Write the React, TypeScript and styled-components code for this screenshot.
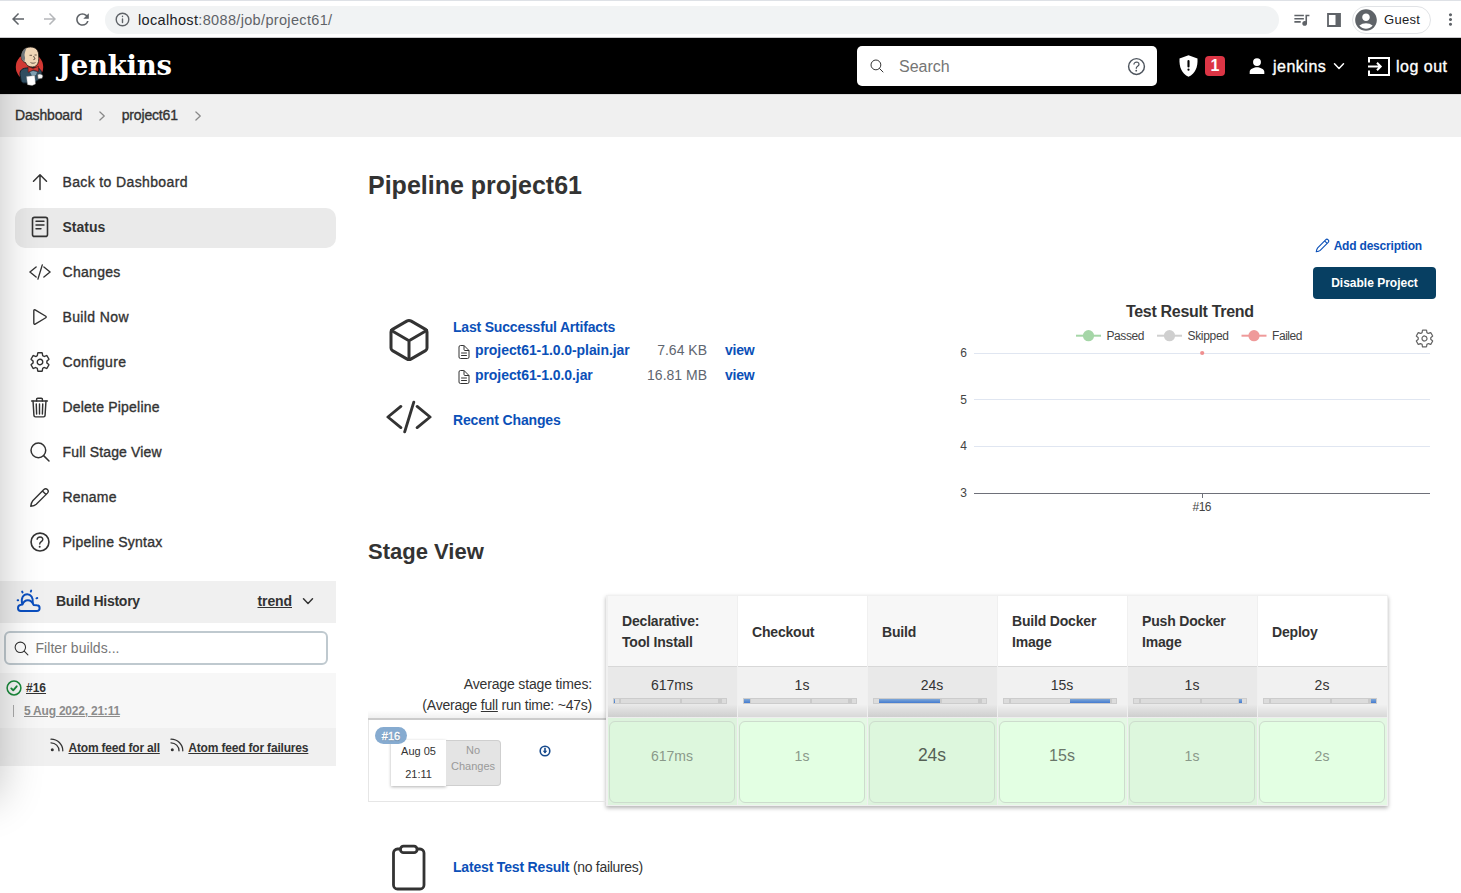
import React from 'react';
import styled, { createGlobalStyle } from 'styled-components';
import {
  IoSettingsOutline, IoTrashOutline, IoSearchOutline, IoHelpCircleOutline,
  IoCubeOutline, IoDocumentTextOutline, IoPlayOutline, IoPersonSharp,
} from 'react-icons/io5';
import { MdOutlineQueueMusic, MdAccountCircle, MdRefresh, MdArrowBack, MdArrowForward, MdMoreVert } from 'react-icons/md';

const INK = '#333333';
const LINK = '#0b50b8';

const Global = createGlobalStyle`
  * { box-sizing: border-box; }
  body { margin: 0; background: #fff; color: ${INK}; overflow: hidden;
    font-family: "Liberation Sans", Arial, Helvetica, sans-serif; font-size: 14px; }
  svg { display: block; flex: none; }
`;

const Page = styled.div`position: relative; width: 1461px; height: 893px; overflow: hidden;`;

/* ---------- text ---------- */
const Text = styled.span<{ $s?: number; $w?: 'medium' | 'bold'; $c?: string; $ls?: number; $u?: boolean }>`
  font-size: ${p => p.$s ?? 14}px;
  font-weight: ${p => (p.$w === 'bold' ? 700 : 400)};
  -webkit-text-stroke: ${p => (p.$w === 'medium' ? '0.35px' : '0')};
  color: ${p => p.$c ?? INK};
  letter-spacing: ${p => p.$ls ?? 0}px;
  text-decoration: ${p => (p.$u ? 'underline' : 'none')};
  white-space: nowrap;
`;

/* ---------- browser toolbar ---------- */
const BrowserBar = styled.div`
  height: 38px; display: flex; align-items: center; color: #5f6368; padding: 1px 0 0 9px;
  border-top: 1px solid #dee1e6; border-bottom: 1px solid #c9c9cc;
`;
const NavIcons = styled.div`display: flex; flex: none; gap: 14px; width: 96px; svg:nth-child(2) { color: #b5b7ba; }`;
const Address = styled.div`
  width: 1174px; flex: none; height: 28px; border-radius: 14px; background: #f1f3f4;
  display: flex; align-items: center; gap: 8px; padding-left: 10px;
`;
const BarTools = styled.div`display: flex; align-items: center; margin-left: 13px; gap: 16px;`;
const Guest = styled.div`
  width: 79px; flex: none; height: 28px; border: 1px solid #e1e3e6; border-radius: 14px; margin: 0 -6.5px 0 -5px;
  display: flex; align-items: center; gap: 5px;
`;

/* ---------- header ---------- */
const Header = styled.header`height: 56px; background: #000; display: flex; align-items: center; padding-left: 15px; color: #fff;`;
const Brand = styled.div`
  display: flex; align-items: center; width: 842px; gap: 14px;
`;
const BrandName = styled.span`
  font: 700 27.5px/34px "DejaVu Serif", Georgia, serif; color: #fff; letter-spacing: -0.25px; margin-top: -3px;
`;
const SearchBox = styled.div`
  width: 300px; height: 40px; border-radius: 5px; background: #fff; color: #333;
  display: flex; align-items: center; padding: 0 9px 0 12px;
  span { flex: 1; margin: 1px 0 0 14px; }
`;
const Security = styled.div`display: flex; align-items: center; gap: 7px; margin-left: 22px; width: 69px;`;
const Alert = styled.span`
  width: 20px; height: 20px; border-radius: 4px; background: #dc3545; display: grid; place-items: center;
`;
const HeaderLink = styled.div<{ $w: number; $gap: number }>`
  display: flex; align-items: center; width: ${p => p.$w}px; gap: ${p => p.$gap}px;
  span { margin-top: 1px; }
`;

/* ---------- breadcrumbs ---------- */
const Crumbs = styled.nav`
  height: 43px; background: #f0f0f0; border-top: 1px solid #dcdcdc; display: flex; align-items: center; padding: 0 0 2px 15px;
  svg { margin: 1px 14.5px 0 15px; }
`;

const Columns = styled.div`display: flex; height: 756px;`;

/* ---------- side panel ---------- */
const Side = styled.aside`width: 336px; padding-top: 26px; flex: none;`;
const Tasks = styled.div`display: flex; flex-direction: column; gap: 5px; padding-left: 15px; margin-bottom: 18px;`;
const Task = styled.div<{ $on?: boolean }>`
  height: 40px; border-radius: 10px; display: flex; align-items: center; gap: 11px; padding: 0 0 2px 12.5px;
  background: ${p => (p.$on ? '#eaeaea' : 'transparent')};
`;
const TaskIcon = styled.span`width: 24px; display: flex; justify-content: center; flex: none;`;
const HistoryHead = styled.div`height: 42px; background: #f0f0f0; display: flex; align-items: center; padding: 0 22px 2px 16px;`;
const HistoryTitle = styled.div`flex: 1; margin-left: 15px;`;
const Trend = styled.div`margin-right: 10px;`;
const Filter = styled.div`
  margin: 8px 8px 8px 4px; height: 34px; border: 2px solid #bfc9cf; border-radius: 6px; background: #fff;
  display: flex; align-items: center; gap: 6px; padding-left: 6.5px;
`;
const BuildItem = styled.div`
  height: 55px; background: #f7f7f7; padding: 6px 0 0 6px; display: flex; flex-direction: column; gap: 6px;
`;
const BuildLine = styled.div<{ $gap: number; $pad?: number }>`
  display: flex; align-items: center; height: 17px; gap: ${p => p.$gap}px; padding-left: ${p => p.$pad ?? 0}px;
`;
const Tick = styled.i`width: 1px; height: 12px; background: #aaa;`;
const Feeds = styled.div`
  height: 38px; background: #f0f0f0; display: flex; align-items: center; padding-left: 50px;
  svg { margin: -5px 4.5px 0 0; }
  span { margin-top: 1px; }
  span + svg { margin-left: 10px; }
`;
const EdgeClip = styled.div`position: absolute; left: 0; top: 94px; width: 60px; height: 799px; overflow: hidden; pointer-events: none;`;
const EdgeShade = styled.div`
  position: absolute; right: 60px; top: -100px; width: 100px; height: 804px; box-shadow: 0 0 44px rgba(0,0,0,.24);
`;

/* ---------- main ---------- */
const Main = styled.main`flex: 1; padding: 28px 25px 0 32px; display: flex; flex-direction: column;`;
const Title = styled.h1`margin: 0; height: 40px; line-height: 40px; font-size: 25px; white-space: nowrap;`;
const Summary = styled.section`display: flex; justify-content: space-between; height: 325px;`;
const Facts = styled.div`padding: 109px 0 0 17px; display: flex; flex-direction: column;`;
const Fact = styled.div<{ $h: number }>`display: flex; height: ${p => p.$h}px; gap: 20px;`;
const FactIcon = styled.div<{ $top: number }>`width: 48px; display: flex; justify-content: center; align-items: flex-start; padding-top: ${p => p.$top}px;`;
const Files = styled.div<{ $top?: number }>`display: flex; flex-direction: column; padding-top: ${p => p.$top ?? 3}px;`;
const FileRow = styled.div`
  display: grid; grid-template-columns: 22px 158px 74px 48px; height: 25px; align-items: center;
  > svg { margin: 4px 0 0 3px; }
  > :nth-child(3) { text-align: right; }
  > :nth-child(4) { padding-left: 18px; }
`;
const TopLine = styled.div`height: 20px; display: flex; align-items: center;`;
const Aside = styled.div`width: 480px; padding-top: 30px; display: flex; flex-direction: column; align-items: flex-end;`;
const AddDesc = styled.div`display: flex; align-items: center; gap: 4px; height: 20px; margin-right: 14px; color: ${LINK}; span { margin-top: 1px; }`;
const Disable = styled.div`
  width: 123px; height: 32px; margin-top: 12px; background: #073f62; border-radius: 4px; display: grid; place-items: center;
`;
const SubTitle = styled.h2`margin: 0; height: 44px; line-height: 44px; font-size: 22px; white-space: nowrap;`;

const Stage = styled.section`display: flex; margin-top: 21px; height: 211px;`;
const RunColumn = styled.div`width: 238px; display: flex; flex-direction: column;`;
const Averages = styled.div`
  height: 125px; padding: 79px 14px 0 0; text-align: right; line-height: 21px;
  border-bottom: 2px solid #cccccc; background: linear-gradient(#fff 94%, #f0f0f0);
`;
const Run = styled.div`
  height: 82px; border: 1px solid #e6e6e6; border-top: 0; border-right: 0; position: relative; padding: 20px 0 0 22px; display: flex;
`;
const RunBadge = styled.span`
  position: absolute; left: 6px; top: 7px; width: 32px; height: 17px; border-radius: 9px; background: #86abd0;
  display: grid; place-items: center; text-shadow: 0 1px 1px rgba(0,0,0,.3);
`;
const RunDate = styled.div`
  width: 55px; height: 46px; background: #fff; box-shadow: 0 1px 3px rgba(0,0,0,.3);
  display: flex; flex-direction: column; align-items: center; line-height: 23px;
`;
const NoChanges = styled.div`
  width: 55px; height: 46px; background: #e4e4e4; border: 1px solid #cfcfcf; border-left: 0; border-radius: 0 4px 4px 0;
  display: flex; flex-direction: column; align-items: center; line-height: 15.5px; padding-top: 2px;
`;
const Download = styled.div`margin: 5px 0 0 38px;`;
const Grid = styled.div`
  display: grid; grid-template-columns: repeat(6, 129px); column-gap: 1px; background: #f0f0f0; height: 211px; width: 782px;
  padding: 1px 1px 1px 1.5px; box-shadow: 0 2px 4px rgba(0,0,0,.3);
`;
const Col = styled.div`display: flex; flex-direction: column;`;
const ColHead = styled.div<{ $odd: boolean }>`
  height: 71px; background: ${p => (p.$odd ? '#f7f7f7' : '#fff')}; border-bottom: 1px solid #d8d8d8;
  padding: 2px 0 0 14.5px; display: flex; flex-direction: column; justify-content: center; line-height: 21px;
`;
const ColAvg = styled.div<{ $odd: boolean }>`
  height: 51px; padding: 7px 10px 0 5.5px; text-align: center; line-height: 22px;
  background: ${p => (p.$odd ? 'linear-gradient(#e9e9e9 75%, #cecece)' : 'linear-gradient(#f1f1f1 75%, #d8d8d8)')};
  border-bottom: 1px solid #eee;
  > span { display: block; margin-left: 4.5px; }
`;
const Meter = styled.div`
  height: 6px; margin-top: 2px; border: 1px solid #cccccc; position: relative; overflow: hidden;
  background: linear-gradient(90deg, #dcdcdc 5px, #cacaca 5px 7px, #dcdcdc 7px 66px, #cacaca 66px 68px, #dcdcdc 68px 104px, #cacaca 104px 108px, #dcdcdc 108px);
`;
const MeterFill = styled.i`
  position: absolute; top: 0; bottom: 0; background: linear-gradient(#7fa8d8, #447bd0);
`;
const CellWrap = styled.div<{ $odd: boolean }>`
  height: 87px; padding: 3px 1.5px 3px; background: ${p => (p.$odd ? '#ddf3dd' : '#e3f8e3')};
`;
const Cell = styled.div<{ $odd: boolean }>`
  height: 82px; border: 1px solid #cddccd; border-radius: 6px; background: ${p => (p.$odd ? '#ddf7dd' : '#e3ffe3')};
  display: grid; place-items: center; padding-bottom: 13px;
`;
const TestResult = styled.div`display: flex; align-items: center; gap: 20px; padding: 36px 0 0 17px; height: 86px; svg { margin-top: 1px; }`;

/* ---------- icons ---------- */
const stroke = { fill: 'none', stroke: 'currentColor', strokeLinecap: 'round' as const, strokeLinejoin: 'round' as const };

const Code = ({ size, sw }: { size: number; sw: number }) => (
  <svg width={size} height={size} viewBox="0 0 48 48" {...stroke} strokeWidth={sw}>
    <path d="M15.5 13 2 24l13.5 11M32.5 13 46 24l-13.500 11M29 8.500 19.500 39.500" />
  </svg>
);
const Up = () => (
  <svg width="24" height="24" viewBox="0 0 24 24" {...stroke} strokeWidth="1.5"><path d="M5.5 11.2 12 4.8l6.5 6.4M12 5v14.5" /></svg>
);
const Doc = () => (
  <svg width="24" height="24" viewBox="0 0 24 24" {...stroke} strokeWidth="1.6">
    <rect x="4.5" y="2.4" width="15" height="19" rx="2" /><path d="M8 6.3h8M8 10h8M8 13.7h5" strokeWidth="1.4" />
  </svg>
);
const Pencil = ({ size = 24, sw = 1.5 }: { size?: number; sw?: number }) => (
  <svg width={size} height={size} viewBox="0 0 24 24" {...stroke} strokeWidth={sw}>
    <path d="M2 22c.5-3.300 1-4.800 2.300-6.300L17 2.900a2.900 2.900 0 0 1 4.100 4.100L8.300 19.700C6.800 21.100 5.200 21.700 2 22ZM15.300 4.500l4.200 4.200" />
  </svg>
);
const Chevron = ({ dir, size, color = 'currentColor', sw = 1.5 }: { dir: 'r' | 'd'; size: number; color?: string; sw?: number }) => (
  <svg width={size} height={size} viewBox="0 0 12 12" fill="none" stroke={color} strokeWidth={sw} strokeLinecap="round" strokeLinejoin="round">
    <path d={dir === 'r' ? 'M3.5 1.2 8.7 6l-5.2 4.8' : 'M1.5 3.8 6 8.4l4.5-4.6'} />
  </svg>
);
const Rss = () => (
  <svg width="14" height="14" viewBox="0 0 14 14" {...stroke} strokeWidth="1.3">
    <path d="M1 1.2c6.5 0 11.8 5 11.8 11.6M1 4.8c4.5 0 8 3.5 8 8" /><circle cx="2.3" cy="11.7" r="1.5" fill="currentColor" stroke="none" />
  </svg>
);
const Weather = () => (
  <svg width="25" height="26" viewBox="0 0 25 26" {...stroke} stroke="#0b4fc0" strokeWidth="2">
    <path d="M4.800 23H20.600a2.900 2.900 0 0 0 .2-5.800L17.600 16.900C16.300 13.900 14.400 12.200 11.800 12.200S7.500 13.700 6.500 16.500C3.500 16.700 2 18 2 19.900c0 1.900 1.100 3.100 2.800 3.100Z" />
    <path d="M6.200 16C4.600 9.500 7.500 6.200 11.200 6.200s6.200 3.500 5.600 9" strokeWidth="1.900" />
    <path d="M6.100 3.500l.5 1M15.200 2.600l-.4 1M1.600 12.300h.6M21.300 10l-.9.300" strokeWidth="1.900" />
  </svg>
);
const Butler = () => (
  <svg width="29" height="40" viewBox="0 0 29 40">
    <circle cx="14.5" cy="21" r="13.7" fill="#d33833" />
    <path d="M5.500 31c-1.500-5 0-8.500 6-9l10-.5c4 1 5.500 4 5.500 8l-3 4-6 3.500H8c-2-1-2-3-2.500-6Z" fill="#2f4d60" stroke="#0f1d26" />
    <path d="M6.500 11C6.500 4.500 10 1 15.500 1s8.300 3.500 8.200 9c0 2 .3 3.500-.2 5.500-.6 3.500-3 5.500-6 5.500-3.500 0-6-1.500-7-4.500-2.700-.5-4-2.500-4-5.500Z" fill="#f0d6b7" stroke="#1f1a17" strokeWidth=".8" />
    <path d="M6.200 10.500C6.300 6 8.500 3 11.500 2c-1 2.500-1.700 4.500-2 7l.6 3-.6 3.500C7.200 14.500 6.200 12.500 6.200 10.500Z" fill="#70757a" />
    <path d="M14.500 9.300h2.500M19.500 9h2.200M18.500 10l1.600 3-1.800.7M15.500 16.500c1.500 1 3.700.9 5 0" fill="none" stroke="#4a3c33" strokeWidth=".8" />
    <path d="M13 20.500l5 2 5.500-2.200v5.200l-5.200-1.500-5.100 2.300Z" fill="#d33833" stroke="#5c1512" strokeWidth=".6" />
    <path d="M15 26l3-1 4 1-1 3-4 1Z" fill="#7fa0b2" />
    <path d="M11.500 30.500l8.200-1 .8 8.500-3.300 1.500-4.700-.8Z" fill="#fff" stroke="#8b8b8b" strokeWidth=".4" />
    <path d="M22.500 28.500c2-1.200 5-.5 5.500 1.500l-1 2.500-4 .5Z" fill="#f5f5f5" stroke="#444" strokeWidth=".6" />
  </svg>
);
const Shield = () => (
  <svg width="19" height="22" viewBox="0 0 18 22" preserveAspectRatio="none"><path d="M9 .2 17.500 3.500C18 12 15.500 18.500 9 21.800 2.500 18.500 0 12 .5 3.500Z" fill="#fff" /><path d="M9 6v5.500M9 14.400v.4" stroke="#000" strokeWidth="2" strokeLinecap="round" /></svg>
);
const LogOut = () => (
  <svg width="22" height="19" viewBox="0 0 22 19" fill="none" stroke="#fff" strokeWidth="2"><path d="M1 5.500V1h20v17H1v-4.500M0 9.500h12M9 5.800l3.700 3.700L9 13.200" /></svg>
);
const Info = () => (
  <svg width="15" height="15" viewBox="0 0 15 15" {...stroke} strokeWidth="1.4"><circle cx="7.5" cy="7.5" r="6.3" /><path d="M7.5 7v3.6M7.5 4.3v.2" /></svg>
);
const Panel = () => (
  <svg width="14" height="14" viewBox="0 0 14 14"><path d="M1 1h12v12H1Z" fill="none" stroke="#5f6368" strokeWidth="1.8" /><path d="M8.5 1H13v12H8.5Z" fill="#5f6368" /></svg>
);
const Check = () => (
  <svg width="16" height="16" viewBox="0 0 16 16" {...stroke} stroke="#1b8a3c" strokeWidth="1.5"><circle cx="8" cy="8" r="6.9" /><path d="m5.3 8.4 1.9 1.9 3.5-4" strokeWidth="1.9" /></svg>
);
const DownloadIcon = () => (
  <svg width="12" height="12" viewBox="0 0 12 12" fill="none" stroke="#174a8c" strokeWidth="1.6"><circle cx="6" cy="6" r="4.8" /><path d="M6 2.8v5" /><path d="M3.7 5.8h4.6L6 8.5Z" fill="#174a8c" stroke="none" /></svg>
);
const Clipboard = () => (
  <svg width="48" height="48" viewBox="0 0 48 48" {...stroke} strokeWidth="2.8">
    <path d="M32.5 5H35a4 4 0 0 1 4 4v32a4 4 0 0 1-4 4H12.5a4 4 0 0 1-4-4V9a4 4 0 0 1 4-4H15" /><rect x="15.5" y="2.2" width="16.5" height="6.5" rx="3" />
  </svg>
);

const Chart = () => (
  <svg width="480" height="226" viewBox="956 299 480 226" fontFamily="Liberation Sans, Arial, sans-serif" fill="#444">
    <text x="1190" y="317" fontSize="16" fontWeight="700" textAnchor="middle" fill={INK} textLength="128">Test Result Trend</text>
    {[
      { n: 'Passed', x: 1076, c: '#a5d6a7', w: 38 },
      { n: 'Skipped', x: 1157, c: '#cfcfcf', w: 41.5 },
      { n: 'Failed', x: 1241.5, c: '#ef9a9a', w: 30.5 },
    ].map(l => (
      <g key={l.n}>
        <path d={`M${l.x} 335.7h25`} stroke={l.c} strokeWidth="2" />
        <circle cx={l.x + 12.5} cy="335.7" r="5.6" fill={l.c} />
        <text x={l.x + 30.5} y="340" fontSize="12" textLength={l.w}>{l.n}</text>
      </g>
    ))}
    {[6, 5, 4, 3].map((n, i) => (
      <g key={n}>
        <path d={`M974 ${[353.5, 399.5, 446.5, 493.5][i]}h456`} stroke={n === 3 ? '#6e7079' : '#e0e6f1'} />
        <text x="967" y={[357.3, 403.8, 450.3, 497.3][i]} fontSize="12" textAnchor="end">{n}</text>
      </g>
    ))}
    <path d="M1202.5 493v5" stroke="#6e7079" />
    <circle cx="1202.2" cy="353" r="2.1" fill="#ef8f8f" />
    <text x="1202" y="511" fontSize="12" textAnchor="middle" textLength="19">#16</text>
    <g transform="translate(1414.5 328.5)" color="#666"><IoSettingsOutline size={20} /></g>
  </svg>
);

const tasks: [string, React.ReactNode, number][] = [
  ['Back to Dashboard', <Up />, 0.37],
  ['Status', <Doc />, 0],
  ['Changes', <Code size={22} sw={3} />, 0.3],
  ['Build Now', <IoPlayOutline size={22} />, 0.37],
  ['Configure', <IoSettingsOutline size={22} />, 0.35],
  ['Delete Pipeline', <IoTrashOutline size={23} />, 0.2],
  ['Full Stage View', <IoSearchOutline size={24} />, 0.15],
  ['Rename', <Pencil size={21} sw={1.6} />, 0.2],
  ['Pipeline Syntax', <IoHelpCircleOutline size={26} />, 0.23],
];

const stages = [
  { head: ['Declarative:', 'Tool Install'], t: '617ms', left: 0, w: 1, s: 14, c: '#8a998a' },
  { head: ['Checkout'], t: '1s', left: 0, w: 6, s: 14, c: '#8a998a' },
  { head: ['Build'], t: '24s', left: 5, w: 61, s: 17.5, c: '#556055' },
  { head: ['Build Docker', 'Image'], t: '15s', left: 66, w: 40, s: 16, c: '#6a776a' },
  { head: ['Push Docker', 'Image'], t: '1s', left: 105, w: 3, s: 14, c: '#8a998a' },
  { head: ['Deploy'], t: '2s', left: 107, w: 6, s: 14, c: '#8a998a' },
];

export default function App() {
  return (
    <Page>
      <Global />
      <BrowserBar>
        <NavIcons><MdArrowBack size={18} /><MdArrowForward size={18} /><MdRefresh size={19} /></NavIcons>
        <Address><Info /><Text $s={14.5} $c="#5f6368" $ls={0.34}><Text $s={14.5} $c="#202124" $ls={0.34}>localhost</Text>:8088/job/project61/</Text></Address>
        <BarTools>
          <MdOutlineQueueMusic size={19} />
          <Panel />
          <Guest><MdAccountCircle size={26} /><Text $s={13} $c="#202124" $ls={0.3}>Guest</Text></Guest>
          <MdMoreVert size={19} />
        </BarTools>
      </BrowserBar>
      <Header>
        <Brand><Butler /><BrandName>Jenkins</BrandName></Brand>
        <SearchBox><IoSearchOutline size={16} /><Text $s={16} $c="#757575">Search</Text><IoHelpCircleOutline size={23} color="#4d545d" /></SearchBox>
        <Security><Shield /><Alert><Text $s={16} $w="bold" $c="#fff">1</Text></Alert></Security>
        <HeaderLink $w={120} $gap={7}><IoPersonSharp size={18} /><Text $s={16} $w="medium" $c="#fff" $ls={0.5}>jenkins</Text><Chevron dir="d" size={12} /></HeaderLink>
        <HeaderLink $w={92} $gap={6}><LogOut /><Text $s={16} $w="medium" $c="#fff" $ls={0.5}>log out</Text></HeaderLink>
      </Header>
      <Crumbs>
        <Text $w="medium" $ls={-0.15}>Dashboard</Text><Chevron dir="r" size={10} color="#888" /><Text $w="medium" $ls={-0.15}>project61</Text><Chevron dir="r" size={10} color="#888" />
      </Crumbs>
      <Columns>
        <Side>
          <Tasks>
            {tasks.map(([name, icon, ls], i) => (
              <Task key={name} $on={i === 1}><TaskIcon>{icon}</TaskIcon><Text $w={i === 1 ? 'bold' : 'medium'} $ls={ls}>{name}</Text></Task>
            ))}
          </Tasks>
          <HistoryHead>
            <Weather /><HistoryTitle><Text $w="bold" $ls={-0.25}>Build History</Text></HistoryTitle>
            <Trend><Text $w="bold" $u $ls={-0.1}>trend</Text></Trend><Chevron dir="d" size={12} />
          </HistoryHead>
          <Filter><IoSearchOutline size={17} /><Text $c="#777" $ls={0.05}>Filter builds...</Text></Filter>
          <BuildItem>
            <BuildLine $gap={4}><Check /><Text $s={12} $w="bold" $u>#16</Text></BuildLine>
            <BuildLine $gap={10} $pad={7}><Tick /><Text $s={12} $w="bold" $c="#8c8c8c" $u $ls={-0.22}>5 Aug 2022, 21:11</Text></BuildLine>
          </BuildItem>
          <Feeds><Rss /><Text $s={12} $w="bold" $u $ls={-0.2}>Atom feed for all</Text><Rss /><Text $s={12} $w="bold" $u $ls={-0.18}>Atom feed for failures</Text></Feeds>
        </Side>
        <Main>
          <Title>Pipeline project61</Title>
          <Summary>
            <Facts>
              <Fact $h={80}>
                <FactIcon $top={2}><IoCubeOutline size={48} /></FactIcon>
                <Files>
                  <TopLine><Text $w="bold" $c={LINK} $ls={-0.19}>Last Successful Artifacts</Text></TopLine>
                  {[['project61-1.0.0-plain.jar', '7.64 KB'], ['project61-1.0.0.jar', '16.81 MB']].map(([f, s]) => (
                    <FileRow key={f}><IoDocumentTextOutline size={16} /><Text $w="bold" $c={LINK} $ls={-0.07}>{f}</Text><Text $c="#5f6670">{s}</Text><Text $w="bold" $c={LINK} $ls={-0.2}>view</Text></FileRow>
                  ))}
                </Files>
              </Fact>
              <Fact $h={60}>
                <FactIcon $top={0}><Code size={46} sw={3} /></FactIcon>
                <Files $top={16}><TopLine><Text $w="bold" $c={LINK} $ls={-0.15}>Recent Changes</Text></TopLine></Files>
              </Fact>
            </Facts>
            <Aside>
              <AddDesc><Pencil size={15} sw={1.8} /><Text $s={12} $w="bold" $c={LINK} $ls={-0.2}>Add description</Text></AddDesc>
              <Disable><Text $s={12} $w="bold" $c="#fff">Disable Project</Text></Disable>
              <Chart />
            </Aside>
          </Summary>
          <SubTitle>Stage View</SubTitle>
          <Stage>
            <RunColumn>
              <Averages><Text $ls={-0.15}>Average stage times:</Text><br /><Text $ls={-0.22}>(Average <u>full</u> run time: ~47s)</Text></Averages>
              <Run>
                <RunDate><Text $s={11}>Aug 05</Text><Text $s={11}>21:11</Text></RunDate>
                <NoChanges><Text $s={11} $c="#999">No</Text><Text $s={11} $c="#999">Changes</Text></NoChanges>
                <Download><DownloadIcon /></Download>
                <RunBadge><Text $s={11} $w="medium" $c="#fff">#16</Text></RunBadge>
              </Run>
            </RunColumn>
            <Grid>
              {stages.map((s, i) => {
                const odd = i % 2 === 0;
                return (
                  <Col key={i}>
                    <ColHead $odd={odd}>{s.head.map(h => <Text key={h} $w="bold" $ls={-0.18}>{h}</Text>)}</ColHead>
                    <ColAvg $odd={odd}><Text>{s.t}</Text><Meter><MeterFill style={{ left: s.left, width: s.w }} /></Meter></ColAvg>
                    <CellWrap $odd={odd}><Cell $odd={odd}><Text $s={s.s} $c={s.c}>{s.t}</Text></Cell></CellWrap>
                  </Col>
                );
              })}
            </Grid>
          </Stage>
          <TestResult><Clipboard /><div><Text $w="bold" $c={LINK} $ls={-0.18}>Latest Test Result</Text><Text $ls={-0.3}> (no failures)</Text></div></TestResult>
        </Main>
      </Columns>
      <EdgeClip><EdgeShade /></EdgeClip>
    </Page>
  );
}
